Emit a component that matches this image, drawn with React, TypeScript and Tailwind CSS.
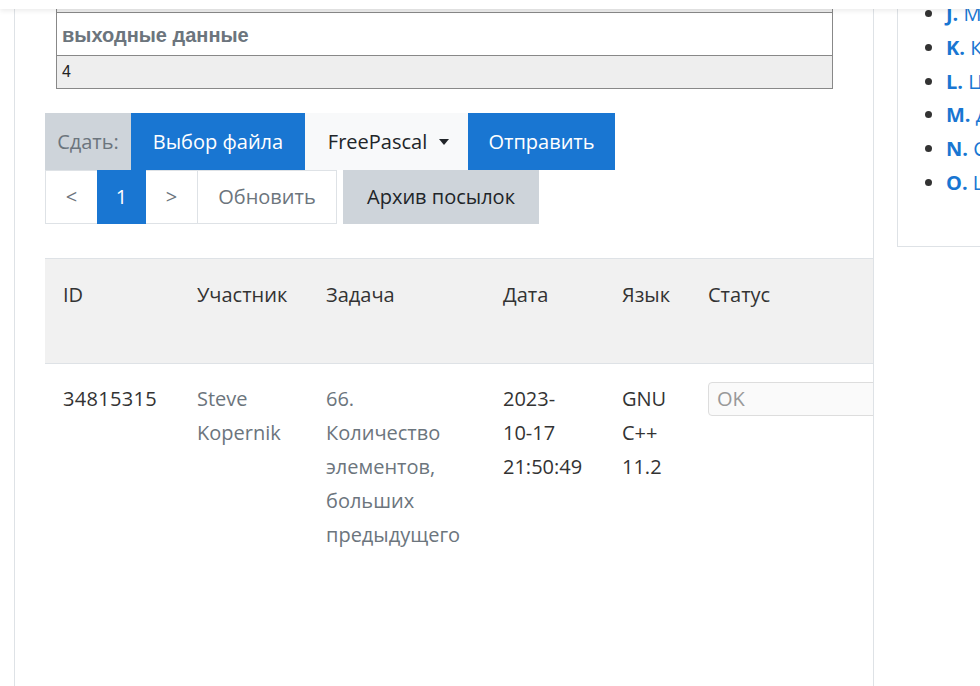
// Страница задачи: низ примера, отправка решения, таблица посылок, правый список задач

const FONT = "font-['Open_Sans','Noto_Sans',sans-serif]";

const problems = [
  { letter: 'J.', title: 'Максимум' },
  { letter: 'K.', title: 'Количество' },
  { letter: 'L.', title: 'Цикл' },
  { letter: 'M.', title: 'Диапазон' },
  { letter: 'N.', title: 'Сумма' },
  { letter: 'O.', title: 'Last' },
];

const cols = 'grid grid-cols-[134px_129px_177px_119px_86px_220px]';

export default function App() {
  return (
    <div className={`relative h-[686px] w-[980px] overflow-hidden bg-white ${FONT}`}>
      {/* нижний край шапки */}
      <div className="absolute left-0 top-0 z-10 h-[9px] w-full bg-white shadow-[0_2px_5px_rgba(0,0,0,0.08)]" />

      <div className="flex items-start">
        {/* основная панель */}
        <div className="ml-[14px] h-[686px] w-[860px] shrink-0 overflow-hidden border-x border-[#dee2e6] pl-[30px]">
          {/* хвост таблицы с примером */}
          <div className="ml-[11px] w-[777px] border-x border-b border-[#888] font-['Liberation_Sans',Arial,sans-serif]">
            <div className="h-[13px] border-b border-[#888] bg-[#eee]" />
            <div className="flex h-[43px] items-center border-b border-[#888] px-[5px] pt-[1px] text-[20px] font-bold text-[#6c757d]">
              выходные данные
            </div>
            <div className="flex h-[32px] items-center bg-[#eee] px-[5px] text-[16px] text-[#222]">4</div>
          </div>

          {/* сдать решение */}
          <div className="mt-[24px] flex h-[57px] text-[20px]">
            <div className="flex w-[86px] items-center justify-center bg-[#ced4da] text-[#6c757d]">Сдать:</div>
            <button className="flex w-[174px] items-center justify-center bg-[#1976d2] text-white">Выбор файла</button>
            <button className="flex w-[163px] items-center justify-center gap-[12px] bg-[#f8f9fa] pl-[4px] text-[#212529]">
              FreePascal
              <span className="h-0 w-0 border-x-[5px] border-t-[6px] border-x-transparent border-t-[#212529]" />
            </button>
            <button className="flex w-[147px] items-center justify-center bg-[#1976d2] text-white">Отправить</button>
          </div>

          {/* пагинация */}
          <div className="flex h-[54px] text-[20px]">
            <div className="flex border border-[#dee2e6]">
              <button className="w-[51px] text-[#6c757d]">&lt;</button>
              <button className="-my-px w-[49px] bg-[#1976d2] text-white">1</button>
              <button className="w-[52px] border-r border-[#dee2e6] text-[#6c757d]">&gt;</button>
              <button className="w-[138px] text-[#6c757d]">Обновить</button>
            </div>
            <button className="ml-[6px] w-[196px] bg-[#ced4da] text-[#212529]">Архив посылок</button>
          </div>

          {/* таблица посылок */}
          <div className="mt-[34px] w-[887px] text-[20px] leading-[34px]">
            <div className={`${cols} h-[106px] border-y border-[#dee2e6] bg-[#f1f1f1] pt-[19px] text-[#333]`}>
              <div className="px-[18px]">ID</div>
              <div className="px-[18px]">Участник</div>
              <div className="px-[18px]">Задача</div>
              <div className="px-[18px]">Дата</div>
              <div className="px-[18px]">Язык</div>
              <div className="px-[18px]">Статус</div>
            </div>
            <div className={`${cols} pt-[18px]`}>
              <div className="px-[18px] tracking-[0.3px] text-[#333]">34815315</div>
              <div className="px-[18px] text-[#6c757d]">Steve Kopernik</div>
              <div className="px-[18px] text-[#6c757d]">66. Количество элементов, больших предыдущего</div>
              <div className="flex flex-col px-[18px] text-[#333]">
                <span>2023-</span>
                <span>10-17</span>
                <span>21:50:49</span>
              </div>
              <div className="px-[18px] text-[#333]">GNU C++ 11.2</div>
              <div className="px-[18px]">
                <div className="flex h-[34px] items-center rounded-[4px] border border-[#ddd] bg-[#fafafa] px-[8px] text-[#999]">
                  OK
                </div>
              </div>
            </div>
          </div>
        </div>

        {/* правая колонка со списком задач */}
        <div className="ml-[23px] w-[120px] shrink-0 border-b border-l border-[#dee2e6] pb-[46px] pl-[48px]">
          <ul className="-mt-[3px] list-disc text-[20px] leading-[33.8px] marker:text-[#333]">
            {problems.map((p) => (
              <li key={p.letter} className="whitespace-nowrap text-[#1976d2]">
                <b>{p.letter}</b> {p.title}
              </li>
            ))}
          </ul>
        </div>
      </div>
    </div>
  );
}
